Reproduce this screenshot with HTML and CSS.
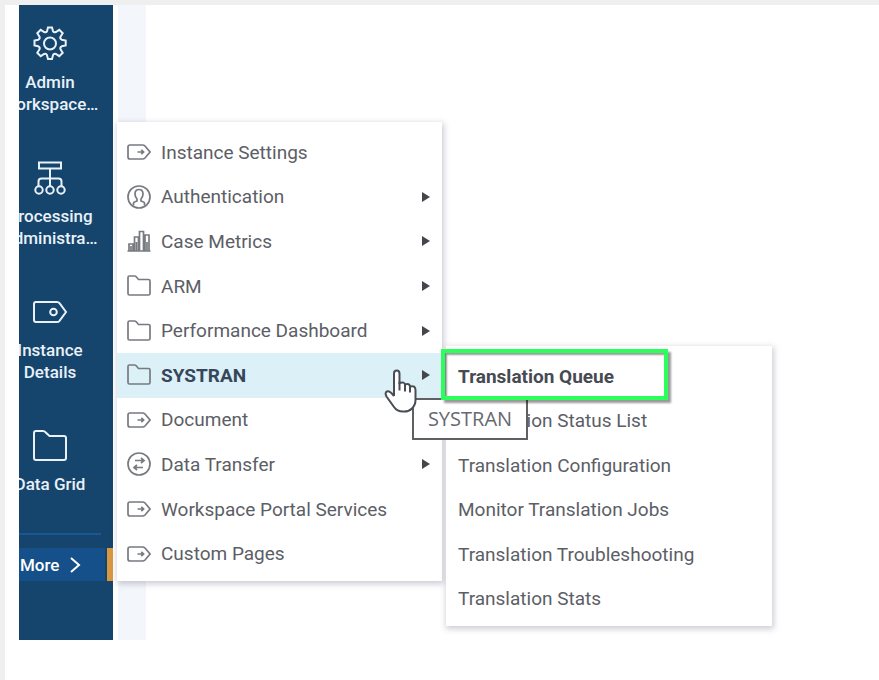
FILE: index.html
```html
<!DOCTYPE html>
<html lang="en">
<head>
    <meta charset="UTF-8">
    <meta name="viewport" content="width=device-width, initial-scale=1.0">
    <title>Translation Queue</title>
    <link rel="stylesheet" href="styles.css">
</head>
<body>
    <!-- Shared icons -->
    <svg class="sprite" aria-hidden="true">
        <symbol id="icon-tag" viewBox="0 0 24 24">
            <path d="M3 5h12.500q1.500 0 2.500 1L23 12l-5 6q-1 1-2.500 1H3q-2 0-2-2V7q0-2 2-2z"/>
            <path d="M10.500 12h6M14.300 9.800l2.300 2.200-2.300 2.200"/>
        </symbol>
        <symbol id="icon-folder" viewBox="0 0 24 24">
            <path d="M1 19.500V3.500q0-1.500 1.500-1.500h5q1 0 1.700.8L11.500 5.500H21.500q1.500 0 1.500 1.500v12.500q0 1.500-1.500 1.500h-19q-1.500 0-1.500-1.500z"/>
        </symbol>
        <symbol id="icon-user" viewBox="0 0 24 24">
            <circle cx="12" cy="12" r="11"/>
            <path d="M6.500 20.500v-2.200q0-1 1-1.300l2.500-1v-2Q8 12 8 9q0-4.500 4-4.500T16 9q0 3-2 5v2l2.500 1q1 .3 1 1.300v2.200"/>
        </symbol>
        <symbol id="icon-chart" viewBox="0 0 24 24">
            <path d="M.5 22h23M2 22v-7h4v7M7.500 22V8h4v14M12.500 22V2.500h4V22M18 22V6h4v16M4 17v5M9.500 13v9M20 13v9"/>
        </symbol>
        <symbol id="icon-transfer" viewBox="0 0 24 24">
            <circle cx="12" cy="12" r="11"/>
            <path d="M8 8.500h9M14 6l3 2.500-3 2.500M16 15.500H7M10 13l-3 2.500 3 2.500"/>
        </symbol>
        <symbol id="icon-arrow" viewBox="0 0 8 10">
            <path d="M0 0l8 5-8 5z"/>
        </symbol>
    </svg>

    <main class="page">
        <div class="app">
            <nav class="sidebar" aria-label="Main">
                <div class="sidebar-items">
                    <a class="sidebar-item" href="#">
                        <svg class="sidebar-icon" viewBox="0 0 36 36">
                            <path d="M16 1.500h4l1 3.700q1 1.600 2.800.8l3.500-2.200 3.400 3.400-2.200 3.500q-.8 2 1.200 3l4 .8v5l-4 .8q-2 1-1.200 3l2.200 3.500-3.400 3.400-3.500-2.200q-2-.8-2.800 1.200L20 33h-4l-1-3.800q-.8-2-2.800-1.200l-3.500 2.200-3.400-3.400 2.200-3.500q.8-2-1.200-3L2.500 19.500v-5l3.800-.8q2-1 1.200-3L5.300 7.200l3.400-3.400L12.200 6q2 .8 2.800-.8z"/>
                            <circle cx="18" cy="17.500" r="6"/>
                        </svg>
                        <span>Admin<br>Workspace…</span>
                    </a>
                    <a class="sidebar-item" href="#">
                        <svg class="sidebar-icon" viewBox="0 0 36 36">
                            <path d="M7 2.500h22v6H7zM18 8.500v18M6.500 26.500v-5q0-3 3-3h17q3 0 3 3v5"/>
                            <circle cx="7" cy="30" r="3.700"/>
                            <circle cx="18" cy="30" r="3.700"/>
                            <circle cx="29" cy="30" r="3.700"/>
                        </svg>
                        <span>Processing<br>Administra…</span>
                    </a>
                    <a class="sidebar-item" href="#">
                        <svg class="sidebar-icon" viewBox="0 0 36 36">
                            <path d="M4 8h21q1.500 0 2.500 1.200L34 18l-6.500 8.800Q26.500 28 25 28H4q-2 0-2-2V10q0-2 2-2z"/>
                            <circle cx="21.500" cy="18" r="3.300"/>
                        </svg>
                        <span>Instance<br>Details</span>
                    </a>
                    <a class="sidebar-item" href="#">
                        <svg class="sidebar-icon" viewBox="0 0 36 36">
                            <path d="M2 30V5q0-2 2-2h7q1.500 0 2.500 1.200L17.500 8H32q2 0 2 2v20q0 2-2 2H4q-2 0-2-2z"/>
                        </svg>
                        <span>Data Grid</span>
                    </a>
                </div>
                <div class="sidebar-more">
                    <button class="more-button" type="button" aria-expanded="true">
                        More
                        <svg class="more-icon" viewBox="0 0 12 16"><path d="M2 1l8 7-8 7"/></svg>
                    </button>
                </div>
            </nav>
            <div class="gutter"></div>

            <div class="menu main-menu">
                <ul class="menu-list">
                    <li><a class="menu-link" href="#"><svg class="menu-icon"><use href="#icon-tag"/></svg>Instance Settings</a></li>
                    <li><a class="menu-link" href="#"><svg class="menu-icon"><use href="#icon-user"/></svg>Authentication<svg class="menu-arrow"><use href="#icon-arrow"/></svg></a></li>
                    <li><a class="menu-link" href="#"><svg class="menu-icon"><use href="#icon-chart"/></svg>Case Metrics<svg class="menu-arrow"><use href="#icon-arrow"/></svg></a></li>
                    <li><a class="menu-link" href="#"><svg class="menu-icon"><use href="#icon-folder"/></svg>ARM<svg class="menu-arrow"><use href="#icon-arrow"/></svg></a></li>
                    <li><a class="menu-link" href="#"><svg class="menu-icon"><use href="#icon-folder"/></svg>Performance Dashboard<svg class="menu-arrow"><use href="#icon-arrow"/></svg></a></li>
                    <li><a class="menu-link active" href="#"><svg class="menu-icon"><use href="#icon-folder"/></svg>SYSTRAN<svg class="menu-arrow"><use href="#icon-arrow"/></svg></a></li>
                    <li><a class="menu-link" href="#"><svg class="menu-icon"><use href="#icon-tag"/></svg>Document</a></li>
                    <li><a class="menu-link" href="#"><svg class="menu-icon"><use href="#icon-transfer"/></svg>Data Transfer<svg class="menu-arrow"><use href="#icon-arrow"/></svg></a></li>
                    <li><a class="menu-link" href="#"><svg class="menu-icon"><use href="#icon-tag"/></svg>Workspace Portal Services</a></li>
                    <li><a class="menu-link" href="#"><svg class="menu-icon"><use href="#icon-tag"/></svg>Custom Pages</a></li>
                </ul>
            </div>

            <div class="menu sub-menu">
                <ul class="menu-list">
                    <li><a class="menu-link current" href="#">Translation Queue</a></li>
                    <li><a class="menu-link" href="#">Translation Status List</a></li>
                    <li><a class="menu-link" href="#">Translation Configuration</a></li>
                    <li><a class="menu-link" href="#">Monitor Translation Jobs</a></li>
                    <li><a class="menu-link" href="#">Translation Troubleshooting</a></li>
                    <li><a class="menu-link" href="#">Translation Stats</a></li>
                </ul>
            </div>

            <div class="tooltip" role="tooltip">SYSTRAN</div>
            <div class="callout"></div>
            <svg class="pointer" viewBox="0 0 34 44" aria-hidden="true">
                <path d="M10 27V4.500Q10 1.500 12.700 1.500T15.500 4.500V14Q20.500 12.500 21 15.500 25.500 14 26 17.500 31.500 16 31.500 21v10q0 5-3.500 8.500T19 42.500q-6 0-9-4.500L2.500 27.500Q.500 23.500 3 22.500T10 27"/>
                <path d="M15.500 13v8.500M21 15v7.500M26 17v6.500"/>
            </svg>
        </div>
    </main>
</body>
</html>
```

FILE: styles.css
```css
* {
    box-sizing: border-box;
}
body {
    margin: 0;
    padding: 5px 0 0 5px;
    background: #efefef;
    font-family: Roboto, "Liberation Sans", sans-serif;
}
a {
    text-decoration: none;
}
svg {
    fill: none;
    stroke: currentColor;
    flex: none;
}
.sprite {
    position: absolute;
    width: 0;
    height: 0;
}
.page {
    min-height: calc(100vh - 5px);
    padding-left: 14px;
    background: #fff;
}
.app {
    position: relative; /* menus are placed over the app */
    display: flex;
}

/* Sidebar */
.sidebar {
    width: 94px;
    padding: 21px 0 59px;
    overflow: hidden;
    background: #15446c;
    color: #e9f1f8;
    font-size: 17px;
    font-weight: 500;
    line-height: 22px;
}
.sidebar-items {
    display: flex;
    flex-direction: column;
    gap: 45px;
    margin-left: -32px;
}
.sidebar-item {
    display: flex;
    flex-direction: column;
    align-items: center;
    gap: 9px;
    color: inherit;
    text-align: center;
}
.sidebar-icon {
    width: 36px;
    height: 36px;
    stroke-width: 2;
}
.sidebar-more {
    margin-top: 38px;
    padding-top: 15px;
    border-right: 6px solid #d9973f;
    border-image: linear-gradient(transparent 15px, #d9973f 15px) 0 6 0 0;
    background: linear-gradient(#1b5796, #1b5796) 0 0 / 82px 2px no-repeat;
}
.more-button {
    display: flex;
    align-items: center;
    gap: 10px;
    width: 86px;
    height: 33px;
    padding: 0 0 0 1px;
    border: 0;
    background: #15508a;
    color: #fff;
    font: inherit;
    cursor: pointer;
}
.more-icon {
    width: 12px;
    height: 16px;
    stroke-width: 2;
}
.gutter {
    width: 28px;
    margin-left: 5px;
    background: #f3f6fa;
}

/* Flyout menus */
.menu {
    position: absolute;
    padding: 8px 0 5px;
    background: #fff;
    box-shadow: 1px 2px 6px 1px rgba(60, 65, 100, 0.26);
}
.main-menu {
    top: 117px;
    left: 98px;
    width: 325px;
}
.sub-menu {
    top: 341px;
    left: 427px;
    width: 326px;
}
.menu-list {
    display: grid;
    grid-auto-rows: 1fr;
    margin: 0;
    padding: 0;
    list-style: none;
}
.main-menu .menu-list {
    height: 446px;
}
.sub-menu .menu-list {
    height: 267px;
}
.menu-link {
    display: flex;
    align-items: center;
    gap: 10px;
    height: 100%;
    padding: 0 12px 0 10px;
    color: #5c5e66;
    font-size: 19px;
    white-space: nowrap;
}
.sub-menu .menu-link {
    padding-left: 12px;
}
.menu-link:hover,
.menu-link.active {
    background: #dbf0f7;
}
.menu-link.active,
.menu-link.current {
    color: #37465a;
    font-weight: 700;
}
.menu-link.current {
    background: #fff;
    color: #484a52;
}
.menu-icon {
    width: 24px;
    height: 24px;
    color: #777a80;
    stroke-width: 1.7;
}
.menu-arrow {
    width: 8px;
    height: 10px;
    margin-left: auto;
    color: #44464c;
    fill: currentColor;
    stroke: none;
}

/* Overlays */
.tooltip {
    position: absolute;
    top: 393px;
    left: 393px;
    width: 116px;
    height: 42px;
    border: 2px solid #606064;
    background: #fff;
    color: #66686e;
    font-family: "Open Sans", sans-serif;
    font-size: 20px;
    line-height: 38px;
    text-align: center;
}
.callout {
    position: absolute;
    top: 344px;
    left: 422px;
    width: 227px;
    height: 51px;
    border: 4px solid #2bff5b;
    box-shadow: 3px 3px 2px rgba(0, 0, 0, 0.4), inset 2px 2px 2px rgba(0, 0, 0, 0.4);
    pointer-events: none;
}
.pointer {
    position: absolute;
    top: 364px;
    left: 365px;
    width: 34px;
    height: 44px;
    fill: #fff;
    stroke: #484c54;
    stroke-width: 2;
}
```
